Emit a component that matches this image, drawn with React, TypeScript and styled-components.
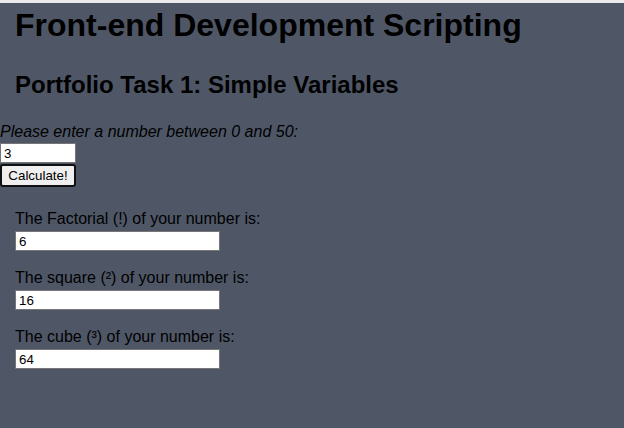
import React, { useState } from 'react';
import styled, { createGlobalStyle } from 'styled-components';

const GlobalStyle = createGlobalStyle`
    html, body {
        margin: 0;
        padding: 0;
        background: #4f5767;
    }
    body {
        font-family: 'Liberation Sans', Arial, sans-serif;
        color: #000;
    }
`;

const Page = styled.div`
    width: 624px;
    height: 428px;
    background: #4f5767;
    border-top: 3px solid #ebebeb;
    box-sizing: border-box;
    overflow: hidden;
`;

const Header = styled.header`
    padding: 0 15px;
`;

const Title = styled.h1`
    margin: 4px 0 0;
    font-size: 32px;
    font-weight: bold;
    line-height: 37px;
`;

const Subtitle = styled.h2`
    margin: 27px 0 0;
    font-size: 24px;
    font-weight: bold;
    line-height: 28px;
`;

const Form = styled.form`
    display: flex;
    flex-direction: column;
    align-items: flex-start;
    margin-top: 23px;
`;

const Prompt = styled.label`
    font-style: italic;
    font-size: 16px;
    line-height: 19px;
`;

const NumberInput = styled.input`
    width: 76px;
    height: 20px;
    box-sizing: border-box;
    margin: 2px 0 0;
    padding: 1px 3px;
    border: 1px solid #767676;
    background: #fff;
    font-family: 'Liberation Sans', Arial, sans-serif;
    font-size: 13.33px;
`;

const CalcButton = styled.button`
    width: 76px;
    height: 23px;
    margin: 1px 0 0;
    padding: 1px 6px;
    box-sizing: border-box;
    border: 2px solid #101010;
    border-radius: 3px;
    background: #efefef;
    font-family: 'Liberation Sans', Arial, sans-serif;
    font-size: 13.33px;
    color: #000;
`;

const Results = styled.section`
    display: flex;
    flex-direction: column;
    gap: 17px;
    padding: 22px 15px 0;
`;

const Result = styled.div`
    display: flex;
    flex-direction: column;
    gap: 3px;
`;

const ResultLabel = styled.span`
    font-size: 16px;
    line-height: 19px;
`;

const ResultBox = styled.input`
    width: 205px;
    height: 20px;
    box-sizing: border-box;
    margin: 0;
    padding: 1px 3px;
    border: 1px solid #767676;
    background: #fff;
    font-family: 'Liberation Sans', Arial, sans-serif;
    font-size: 13.33px;
    color: #000;
`;

const results = [
    { label: 'The Factorial (!) of your number is:', value: '6' },
    { label: 'The square (²) of your number is:', value: '16' },
    { label: 'The cube (³) of your number is:', value: '64' },
];

export default function App() {
    const [value, setValue] = useState('3');

    return (
        <Page>
            <GlobalStyle />
            <Header>
                <Title>Front-end Development Scripting</Title>
                <Subtitle>Portfolio Task 1: Simple Variables</Subtitle>
            </Header>
            <Form onSubmit={e => e.preventDefault()}>
                <Prompt htmlFor="num">Please enter a number between 0 and 50:</Prompt>
                <NumberInput id="num" value={value} onChange={e => setValue(e.target.value)} />
                <CalcButton type="submit">Calculate!</CalcButton>
            </Form>
            <Results>
                {results.map(r => (
                    <Result key={r.label}>
                        <ResultLabel>{r.label}</ResultLabel>
                        <ResultBox readOnly value={r.value} />
                    </Result>
                ))}
            </Results>
        </Page>
    );
}
